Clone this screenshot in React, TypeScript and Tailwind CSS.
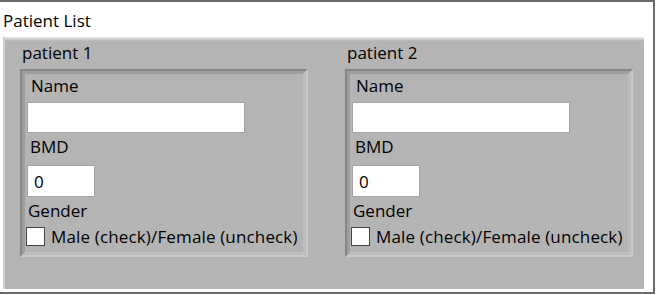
import React from "react";

type Patient = { label: string; name: string; bmd: string; male: boolean };

const patients: Patient[] = [
  { label: "patient 1", name: "", bmd: "0", male: false },
  { label: "patient 2", name: "", bmd: "0", male: false },
];

function PatientCluster({ patient }: { patient: Patient }) {
  return (
    <div className="flex w-[288px] flex-col">
      <div className="h-[28px] pl-[2px] leading-[23px]">{patient.label}</div>
      {/* recessed frame: dark top/left, light bottom/right */}
      <div className="h-[188px] border-2 border-t-[#868686] border-l-[#868686] border-b-[#c9c9c9] border-r-[#c9c9c9]">
        <div className="flex h-full flex-col border-[3px] border-t-[#9e9e9e] border-l-[#9e9e9e] border-b-[#bdbdbd] border-r-[#bdbdbd] bg-[#b4b4b4]">
          <div className="h-[28px] pl-[6px] leading-[23px]">Name</div>
          <div className="ml-[2px] h-[31px] w-[218px] border border-[#a4a4a4] bg-white">{patient.name}</div>
          <div className="h-[32px] pt-[2px] pl-[5px] leading-[23px]">BMD</div>
          <div className="ml-[2px] flex h-[32px] w-[68px] items-center border border-[#a4a4a4] bg-white pl-[6px] leading-[23px]">
            {patient.bmd}
          </div>
          <div className="h-[30px] pt-[2px] pl-[3px] leading-[23px]">Gender</div>
          <div className="ml-[1px] flex h-[19px] items-center gap-[6px]">
            <span className="h-[19px] w-[19px] shrink-0 border border-[#444] bg-white" />
            <span className="leading-[23px] tracking-[0.15px] whitespace-nowrap">Male (check)/Female (uncheck)</span>
          </div>
        </div>
      </div>
    </div>
  );
}

export default function App() {
  return (
    <div className="h-[295px] w-[656px] bg-white font-['Open_Sans',sans-serif] text-[17px] text-black">
      <div className="flex h-[294px] w-[655px] flex-col border-t-2 border-r-2 border-b-2 border-[#6b6b6b]">
        <div className="h-[35px] pt-[7px] pl-[3px] leading-[23px]">Patient List</div>
        <div className="mr-[9px] ml-[3px] flex h-[252px] flex-col border-l-2 border-l-[#cfcfcf] bg-[#b4b4b4]">
          <div className="h-[4px] bg-linear-to-b from-[#eeeeee] to-[#b4b4b4]" />
          <div className="flex gap-[37px] pl-[15px]">
            {patients.map((p) => (
              <PatientCluster key={p.label} patient={p} />
            ))}
          </div>
        </div>
      </div>
    </div>
  );
}
